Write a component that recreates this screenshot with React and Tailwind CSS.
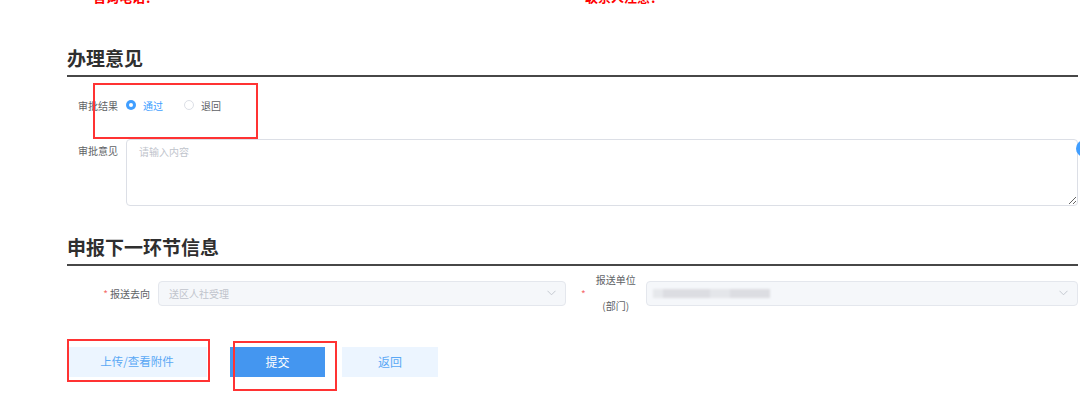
import React, { useState } from "react";

const font = { fontFamily: '"Noto Sans CJK SC", "Noto Sans", sans-serif' };

function Radio({ checked, label, onClick }) {
  return (
    <label className="flex items-center cursor-pointer" onClick={onClick}>
      {checked ? (
        <span className="w-[10px] h-[10px] rounded-full bg-[#409eff] flex items-center justify-center">
          <span className="w-[4px] h-[4px] rounded-full bg-white" />
        </span>
      ) : (
        <span className="w-[10px] h-[10px] rounded-full border border-[#dcdfe6] bg-white" />
      )}
      <span
        className={
          "ml-[7px] text-[10px] " +
          (checked ? "text-[#409eff]" : "text-[#606266]")
        }
      >
        {label}
      </span>
    </label>
  );
}

function Chevron() {
  return (
    <svg width="9" height="6" viewBox="0 0 9 6" fill="none">
      <path d="M0.5 0.8 L4.5 4.8 L8.5 0.8" stroke="#c0c4cc" strokeWidth="0.9" />
    </svg>
  );
}

function App() {
  const [result, setResult] = useState("pass");

  return (
    <div
      className="relative w-[1080px] h-[409px] overflow-hidden bg-white"
      style={font}
    >
      {/* contact line, scrolled mostly out of view */}
      <div className="flex -mt-[11px] h-[16px] leading-[16px] text-[13px] font-bold text-[#f00]">
        <span className="ml-[93px]">咨询电话：</span>
        <span className="ml-[427px]">联系人注意：</span>
      </div>

      <div className="pl-[67px] pr-[2px]">
        {/* 办理意见 */}
        <div className="mt-[41px] pb-[5px] border-b-2 border-[#474747]">
          <h2 className="text-[19px] leading-[24px] font-bold text-[#2f2f2f]">
            办理意见
          </h2>
        </div>

        <div className="mt-[14px] h-[28px] flex items-center">
          <div className="w-[59px] pr-[8px] text-right text-[10px] text-[#606266]">
            审批结果
          </div>
          <div className="flex items-center gap-[21px]">
            <Radio
              checked={result === "pass"}
              label="通过"
              onClick={() => setResult("pass")}
            />
            <Radio
              checked={result === "back"}
              label="退回"
              onClick={() => setResult("back")}
            />
          </div>
        </div>

        <div className="mt-[20px] flex items-start">
          <div className="w-[59px] pr-[8px] text-right text-[10px] leading-[24px] text-[#606266]">
            审批意见
          </div>
          <textarea
            placeholder="请输入内容"
            className="flex-1 h-[67px] border border-[#dcdfe6] rounded-[4px] px-[12px] py-[5px] text-[10px] leading-[14px] placeholder:text-[#c0c4cc] outline-none"
            style={font}
          />
        </div>

        {/* 申报下一环节信息 */}
        <div className="mt-[29px] pb-[5px] border-b-2 border-[#474747]">
          <h2 className="text-[19px] leading-[24px] font-bold text-[#2f2f2f]">
            申报下一环节信息
          </h2>
        </div>

        <div className="mt-[1px] h-[52px] flex items-center">
          <div className="w-[91px] pr-[8px] text-right text-[10px] text-[#606266]">
            <span className="text-[#f56c6c] mr-[2px]">*</span>报送去向
          </div>
          <div className="w-[408px] h-[25px] flex items-center justify-between bg-[#f5f7fa] border border-[#e4e7ed] rounded-[4px] pl-[10px] pr-[9px]">
            <span className="text-[10px] text-[#c0c4cc]">送区人社受理</span>
            <Chevron />
          </div>
          <div className="w-[80px] flex items-center">
            <span className="ml-[15px] text-[10px] text-[#f56c6c]">*</span>
            <div className="w-[56px] ml-[2px] text-center text-[10px] leading-[26px] text-[#606266]">
              报送单位
              <br />
              (部门)
            </div>
          </div>
          <div className="flex-1 h-[25px] flex items-center justify-between bg-[#f5f7fa] border border-[#e4e7ed] rounded-[4px] pl-[6px] pr-[9px]">
            <div className="flex h-[9px] blur-[1px]">
              <span className="w-[10px] bg-[#e6e8ec]" />
              <span className="w-[47px] bg-[#dcdde2]" />
              <span className="w-[20px] bg-[#e4e6ea]" />
              <span className="w-[40px] bg-[#dcdde2]" />
            </div>
            <Chevron />
          </div>
        </div>

        <div className="mt-[28px] flex items-center">
          <button className="w-[140px] h-[30px] bg-[#ecf5ff] text-[11.5px] text-[#5aa8f5]">
            上传/查看附件
          </button>
          <button className="ml-[23px] w-[95px] h-[30px] bg-[#4496f0] text-[12px] text-white">
            提交
          </button>
          <button className="ml-[17px] w-[96px] h-[30px] bg-[#ecf5ff] text-[12px] text-[#5aa8f5]">
            返回
          </button>
        </div>
      </div>

      {/* annotation boxes */}
      <div className="absolute left-[93px] top-[83px] w-[165px] h-[56px] border-2 border-[#f33] pointer-events-none" />
      <div className="absolute left-[67px] top-[339px] w-[143px] h-[43px] border-2 border-[#f33] pointer-events-none" />
      <div className="absolute left-[233px] top-[341px] w-[104px] h-[50px] border-2 border-[#f33] pointer-events-none" />

      {/* floating button peeking from the right edge */}
      <div className="absolute left-[1076px] top-[140px] w-[17px] h-[17px] rounded-full bg-[#409eff]" />
    </div>
  );
}

export default App;
